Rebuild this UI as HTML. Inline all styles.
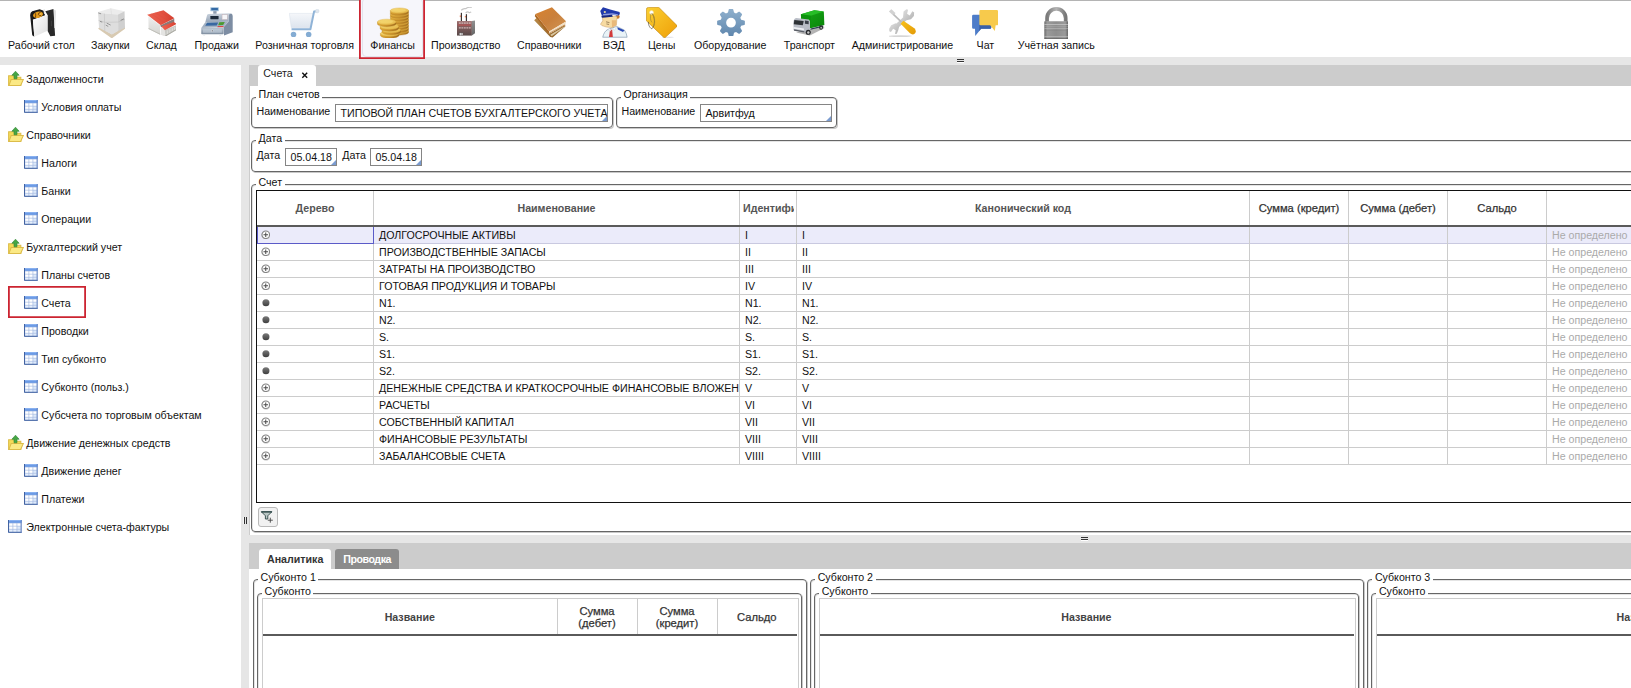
<!DOCTYPE html>
<html lang="ru"><head><meta charset="utf-8"><title>Счета</title>
<style>
html,body{margin:0;padding:0}
body{width:1631px;height:688px;overflow:hidden;background:#fff;font-family:"Liberation Sans",sans-serif;font-size:10.65px;color:#111;line-height:12px}
#app{position:relative;width:1631px;height:688px;overflow:hidden;background:#fff}
#top{position:absolute;left:0;top:0;width:1631px;height:57px;z-index:3;background:#fff}
#top:before{content:"";position:absolute;left:0;top:0;width:100%;height:1px;background:#b4b4b4}
.ti{position:absolute;top:0;height:57px;text-align:center;white-space:nowrap}
.ti .tl{position:absolute;left:0;top:38.6px;color:#111}
.bi{position:absolute;z-index:2;display:block}
.ti.sel:before{content:"";position:absolute;left:-11.2px;width:66.3px;top:-3px;height:61.7px;box-shadow:inset 0 0 0 1.8px #cc2431;background:#f6f6fb;z-index:0;box-sizing:border-box}
.ti.sel:after{content:"";position:absolute;left:-8.3px;width:60.6px;top:-2px;height:59px;border:1px solid #e3e3ec;border-radius:4px;z-index:0;box-sizing:border-box}
.ti.sel .tl{z-index:1}
#hs1{position:absolute;left:0;top:57px;width:1631px;height:8px;background:#e6e6e6}
.hh{position:absolute;width:7px;height:3.4px;border-top:1px solid #333;border-bottom:1px solid #333;box-shadow:0 1px 0 #fff;box-sizing:border-box}
#left{position:absolute;left:0;top:65px;width:241px;height:623px;background:#fff;overflow:hidden}
.tr{position:relative;height:28px;line-height:28px;white-space:nowrap}
.tr span{position:absolute;top:0}
.tr .si{position:absolute}
.tr.l0 .si{left:8px}
.tr.l0 span{left:26.3px}
.tr.l1 .si{left:24.2px}
.tr.l1 span{left:41.3px}
.si.f{width:15.8px;height:15.2px;top:6px}
.si.t{width:13.6px;height:12.8px;top:7.1px}
.tr.l0 .si.t{top:7.2px}
.tr.cur:before{content:"";position:absolute;left:8px;top:-3px;width:78px;height:32px;box-shadow:inset 0 0 0 1.8px #cc2431;box-sizing:border-box}
#vs{position:absolute;left:241px;top:65px;width:8px;height:623px;background:#e6e6e6}
.vh{position:absolute;left:2.5px;top:452px;width:3.6px;height:7px;border-left:1px solid #333;border-right:1px solid #333;box-sizing:border-box;box-shadow:-1px 0 0 #f6f6f6}
#right{position:absolute;left:249px;top:65px;width:1382px;height:623px;background:#fff;overflow:hidden}
.tabbar{position:absolute;left:0;width:1382px;background:#ccc}
#tb1{top:0;height:21px}
#tb2{top:478px;height:26px}
.tab{position:absolute;bottom:0;border-radius:3px 3px 0 0;box-sizing:border-box}
#tb1 .tab{height:21px}
#tb2 .tab{height:20px}
.tab.act{background:#fff;color:#222}
.tab.ina{background:#8c8c8c;color:#fff}
.tab.b{font-weight:bold;color:#333}
.tab.ina.b{color:#fff}
.tab .tt{position:absolute;left:5.3px;top:1.8px}
#tb2 .tab .tt{left:8.5px;top:4px}
.tab .tx{position:absolute;left:43.3px;top:7.2px}
.cx{width:7.5px;height:6.5px;display:block}
#upper{position:absolute;left:1px;top:21px;width:1381px;height:449px;background:#fff;overflow:hidden}
#right:before{content:"";position:absolute;left:0;top:0;width:1px;height:623px;background:#ccc}
#hs2{position:absolute;left:0;top:470px;width:1382px;height:8px;background:#e6e6e6}
#lower{position:absolute;left:0;top:504px;width:1382px;height:119px;background:#fff;overflow:hidden}
.fs{position:absolute;border:1px solid #666;border-radius:4px;box-shadow:1px 1px 0 #c8c8c8, inset 1px 1px 0 #e4e4e4;box-sizing:border-box}
.lg{position:absolute;top:-9px;background:#fff;padding:0 2.5px;white-space:nowrap;line-height:12px}
.lb{position:absolute;white-space:nowrap}
.inp{position:absolute;height:18px;line-height:17px;border:1px solid #858585;box-sizing:border-box;padding-left:4.5px;white-space:nowrap;overflow:hidden;background:#fff}
.inp:after{content:"";position:absolute;right:0;bottom:0;border-style:solid;border-width:0 0 5px 5px;border-color:transparent transparent #7a9bd0 transparent}
#grid{position:absolute;left:4px;top:5px;width:1500px;height:313px;border:1px solid #111;box-sizing:border-box;overflow:hidden;background:#fff}
.gh{height:33.5px;border-bottom:2px solid #5a5a5a;display:flex;white-space:nowrap}
.hc{box-sizing:border-box;border-right:1px solid #ccc;height:33.5px;line-height:34px;text-align:center;font-weight:bold;color:#555;overflow:hidden;flex:none}
.sc.dk{line-height:12.4px;padding-top:2.3px}
.hc.dk,.sc.dk{color:#333;font-weight:normal;font-size:11.2px;-webkit-text-stroke:0.25px #333}
.hc.cl{text-align:left;padding-left:3px}
.hc.cl span{display:block;overflow:hidden;width:51px}
.gr{height:17.04px;display:flex;white-space:nowrap;border-bottom:1px solid #ccc;box-sizing:border-box}
.gr.first{background:#ebebfa}
.gc{box-sizing:border-box;border-right:1px solid #ccc;height:17.04px;line-height:16.5px;padding-left:5px;overflow:hidden;flex:none;position:relative}
.gr.first .gc:first-child{box-shadow:inset 1px 0 0 #5b5bc8,inset 0 -1px 0 #5b5bc8}
.gr.first{border-bottom-color:#c9c9e0}
.gr.first .gc:first-child{border-right-color:#5b5bc8}
.nd{color:#aaa}
.pm{position:absolute;left:3.6px;top:3.2px;width:9.5px;height:9.5px}
.fbtn{position:absolute;left:6px;top:322px;width:20px;height:19.5px;border:1px solid #b9b9b9;border-radius:3px;background:#f1f1f1;box-sizing:border-box}
.fi{position:absolute;left:-1px;top:-1px;width:19.5px;height:19.5px}
.sg{position:absolute;left:4px;top:4px;width:537px;height:200px;border:1px solid #ccc;box-sizing:border-box}
.sh{display:flex;width:533.5px;height:34.5px;border-bottom:2px solid #5a5a5a}
.sc{flex:none;box-sizing:border-box;border-right:1px solid #ccc;height:34.5px;padding-top:2px;display:flex;align-items:center;justify-content:center;text-align:center;font-weight:bold;color:#444;line-height:11.5px}
.sc:last-child{border-right:none}
.tab.ina .tt{letter-spacing:-0.45px}
</style></head><body>
<div id="app">
<div id="top">
<div class="ti" style="left:8.0px"><span class="tl">Рабочий стол</span></div>
<svg class="bi" style="left:29.6px;top:8.9px;width:26.2px;height:27.8px" viewBox="137.6 88.7 474.2 503.2" preserveAspectRatio="none">
<defs><linearGradient id="gd1" x1="0" y1="0" x2="1" y2="1"><stop offset="0" stop-color="#ffffff"/><stop offset="1" stop-color="#dedede"/></linearGradient></defs>
<path d="M140,200 Q140,150 178,130 L312,94 L385,120 L410,200 L190,285 L216,592 L178,565 Z" fill="#1b1b1b"/>
<path d="M380,92 L408,88 L418,168 L392,178 Z" fill="#ececec"/>
<path d="M415,130 L562,90 L592,572 L506,582 L455,482 L455,196 Z" fill="#292929"/>
<path d="M190,285 L455,196 L455,482 L216,592 Z" fill="url(#gd1)"/>
<path d="M572,104 L612,116 L592,432 L578,432 Z" fill="#e2e2e2"/>
<ellipse cx="283" cy="192" rx="92" ry="56" fill="#e59c1a" transform="rotate(-14 283 192)"/>
<path d="M222,160 q20,10 20,40 l-6,45 M300,160 q-30,30 10,50 q35,0 35,-35 q-15,-30 -45,-15" stroke="#5e3306" stroke-width="15" fill="none"/>
<ellipse cx="335" cy="178" rx="22" ry="18" fill="#f4bd46"/>
<path d="M525,300 v100" stroke="#5c5c5c" stroke-width="8"/>
</svg>
<div class="ti" style="left:91.0px"><span class="tl">Закупки</span></div>
<svg class="bi" style="left:97.5px;top:8.2px;width:27.8px;height:30.3px" viewBox="99.6 76.0 503.2 548.4" preserveAspectRatio="none">
<path d="M103,450 L350,626 L604,440 L580,405 L350,550 L125,420 Z" fill="#d8cab2"/>
<path d="M100,150 L330,80 L580,135 L462,192 L215,175 Z" fill="#ececec"/>
<path d="M100,150 L215,175 L462,192 L465,492 L352,556 L118,432 Z" fill="#dedede"/>
<path d="M462,192 L580,135 L588,432 L465,492 Z" fill="#d0d0d0"/>
<path d="M215,175 L222,495 M110,300 L222,335 L465,330 L586,285" stroke="#bcbcbc" stroke-width="9" fill="none"/>
<path d="M330,82 L345,186" stroke="#d6d6d6" stroke-width="8" fill="none"/>
<path d="M105,165 l50,16 M135,318 l42,14 M240,385 l45,25 M258,350 l70,35 M510,300 l60,-28" stroke="#4a4a4a" stroke-width="11" fill="none" opacity=".8"/>
</svg>
<div class="ti" style="left:146.0px"><span class="tl">Склад</span></div>
<svg class="bi" style="left:146.7px;top:9.5px;width:29.8px;height:26.8px" viewBox="121.3 99.6 539.4 485.1" preserveAspectRatio="none">
<defs><linearGradient id="gw1" x1="0" y1="0" x2="1" y2="0"><stop offset="0" stop-color="#ea6250"/><stop offset=".6" stop-color="#e25040"/><stop offset="1" stop-color="#d43e2e"/></linearGradient>
<linearGradient id="gw2" x1="0" y1="0" x2="0" y2="1"><stop offset="0" stop-color="#efefef"/><stop offset="1" stop-color="#d4d4d0"/></linearGradient></defs>
<path d="M145,212 L360,380 L360,548 L150,442 Z" fill="url(#gw2)"/>
<path d="M360,380 L615,258 L615,330 L380,410 Z" fill="#8a7a78"/>
<path d="M125,185 L420,104 L617,250 L370,377 Z" fill="url(#gw1)"/>
<path d="M200,168 L440,330 M270,148 L505,298 M345,126 L565,268" stroke="#d84838" stroke-width="7" fill="none" opacity=".7"/>
<path d="M375,410 L445,462 L452,582 L375,548 Z" fill="#e4e4e2"/>
<path d="M445,462 L656,372 L652,462 L452,582 Z" fill="#c9c9c5"/>
<path d="M380,400 L606,318 L660,352 L445,464 Z" fill="url(#gw1)"/>
<path d="M150,425 L360,530 L360,548 L150,442 Z" fill="#bdbdb6"/>
<path d="M490,470 v70 M535,448 v66 M580,428 v62 M622,408 v58" stroke="#e6e6e2" stroke-width="13"/>
<path d="M452,560 L652,445 L652,462 L452,582 Z" fill="#a9a9a2"/>
</svg>
<div class="ti" style="left:194.4px"><span class="tl">Продажи</span></div>
<svg class="bi" style="left:201.2px;top:6.7px;width:31.7px;height:29.3px" viewBox="94.1 85.1 573.8 530.3" preserveAspectRatio="none">
<defs><linearGradient id="gc1" x1="0" y1="0" x2="0" y2="1"><stop offset="0" stop-color="#b6c2ce"/><stop offset="1" stop-color="#7f8ea0"/></linearGradient>
<linearGradient id="gc2" x1="0" y1="0" x2="0" y2="1"><stop offset="0" stop-color="#c9d2dd"/><stop offset="1" stop-color="#97a6b8"/></linearGradient></defs>
<rect x="262" y="88" width="156" height="74" rx="8" fill="#a9c6de"/>
<rect x="280" y="102" width="120" height="42" fill="#356ba6"/>
<rect x="316" y="160" width="60" height="48" fill="#8e9caf"/>
<path d="M500,452 L592,350 L592,215 L640,202 Q668,215 668,250 L668,540 L512,602 Z" fill="#7d8da3"/>
<path d="M200,250 Q200,215 235,212 L640,200 L592,232 L592,352 L172,362 Z" fill="url(#gc2)"/>
<rect x="264" y="250" width="148" height="56" rx="6" fill="#1d2b3b"/>
<rect x="476" y="226" width="94" height="84" fill="#f6f6f8" stroke="#c9a8a8" stroke-width="6"/>
<path d="M172,362 L592,352 L500,452 L100,464 Z" fill="#a3b1c2"/>
<path d="M205,368 L405,364 L380,420 L170,426 Z" fill="#3868a2"/>
<path d="M425,362 L525,358 L495,410 L405,414 Z" fill="#4b9a32"/>
<path d="M400,430 L505,427 L492,450 L388,452 Z" fill="#da4a4a"/>
<rect x="98" y="462" width="406" height="116" rx="14" fill="url(#gc1)"/>
<rect x="130" y="480" width="342" height="72" rx="8" fill="#c5d0dc" opacity=".6"/>
<circle cx="297" cy="516" r="19" fill="#fff"/><circle cx="297" cy="516" r="11" fill="#1a2230"/>
<ellipse cx="152" cy="590" rx="20" ry="9" fill="#dfe3e8"/><ellipse cx="442" cy="604" rx="20" ry="9" fill="#dfe3e8"/>
</svg>
<div class="ti" style="left:255.3px"><span class="tl">Розничная торговля</span></div>
<svg class="bi" style="left:289.2px;top:8.7px;width:30.4px;height:28.4px" viewBox="94.1 85.1 550.2 514.0" preserveAspectRatio="none">
<defs><linearGradient id="gk1" x1="0" y1="0" x2="0" y2="1"><stop offset="0" stop-color="#f5f7fa"/><stop offset="1" stop-color="#dde4ee"/></linearGradient></defs>
<path d="M100,165 L528,165 L472,425 L135,425 Z" fill="url(#gk1)" stroke="#d3dce8" stroke-width="8"/>
<path d="M598,125 L548,132 L482,452 L140,452" stroke="#8fb3d7" stroke-width="36" fill="none" stroke-linejoin="round"/>
<circle cx="605" cy="122" r="34" fill="#dfe6ee" stroke="#c3d0dd" stroke-width="6"/>
<circle cx="176" cy="546" r="50" fill="#84acd3"/>
<circle cx="450" cy="546" r="50" fill="#84acd3"/>
</svg>
<div class="ti sel" style="left:370.3px"><span class="tl">Финансы</span></div>
<svg class="bi" style="left:377.0px;top:7.3px;width:31.9px;height:31.2px" viewBox="90.5 59.7 577.4 564.7" preserveAspectRatio="none"><defs><linearGradient id="gcs" x1="0" y1="0" x2="1" y2="0"><stop offset="0" stop-color="#dfa936"/><stop offset=".5" stop-color="#c88f2a"/><stop offset="1" stop-color="#a06c1c"/></linearGradient><linearGradient id="gct" x1="0" y1="0" x2="1" y2="1"><stop offset="0" stop-color="#f7dc7c"/><stop offset="1" stop-color="#e3b442"/></linearGradient></defs><path d="M332,489 v32 a165,48 0 0 0 330,0 v-32 z" fill="url(#gcs)" stroke="#a97822" stroke-width="5"/><ellipse cx="497" cy="489" rx="165" ry="48" fill="#cc9630" stroke="#e8bd50" stroke-width="7"/><path d="M332,437 v32 a165,48 0 0 0 330,0 v-32 z" fill="url(#gcs)" stroke="#a97822" stroke-width="5"/><ellipse cx="497" cy="437" rx="165" ry="48" fill="#cc9630" stroke="#e8bd50" stroke-width="7"/><path d="M332,385 v32 a165,48 0 0 0 330,0 v-32 z" fill="url(#gcs)" stroke="#a97822" stroke-width="5"/><ellipse cx="497" cy="385" rx="165" ry="48" fill="#cc9630" stroke="#e8bd50" stroke-width="7"/><path d="M332,333 v32 a165,48 0 0 0 330,0 v-32 z" fill="url(#gcs)" stroke="#a97822" stroke-width="5"/><ellipse cx="497" cy="333" rx="165" ry="48" fill="#cc9630" stroke="#e8bd50" stroke-width="7"/><path d="M332,281 v32 a165,48 0 0 0 330,0 v-32 z" fill="url(#gcs)" stroke="#a97822" stroke-width="5"/><ellipse cx="497" cy="281" rx="165" ry="48" fill="#cc9630" stroke="#e8bd50" stroke-width="7"/><path d="M332,229 v32 a165,48 0 0 0 330,0 v-32 z" fill="url(#gcs)" stroke="#a97822" stroke-width="5"/><ellipse cx="497" cy="229" rx="165" ry="48" fill="#cc9630" stroke="#e8bd50" stroke-width="7"/><path d="M332,177 v32 a165,48 0 0 0 330,0 v-32 z" fill="url(#gcs)" stroke="#a97822" stroke-width="5"/><ellipse cx="497" cy="177" rx="165" ry="48" fill="#cc9630" stroke="#e8bd50" stroke-width="7"/><path d="M332,125 v32 a165,48 0 0 0 330,0 v-32 z" fill="url(#gcs)" stroke="#a97822" stroke-width="5"/><ellipse cx="497" cy="125" rx="165" ry="48" fill="url(#gct)" stroke="#e2b648" stroke-width="8"/><ellipse cx="497" cy="122" rx="115" ry="28" fill="#f3d66e" opacity=".7"/><path d="M152,540 v36 a168,50 0 0 0 336,0 v-36 z" fill="url(#gcs)" stroke="#a97822" stroke-width="5"/><ellipse cx="320" cy="540" rx="168" ry="50" fill="url(#gct)" stroke="#e2b648" stroke-width="8"/><path d="M182,478 v36 a168,50 0 0 0 336,0 v-36 z" fill="url(#gcs)" stroke="#a97822" stroke-width="5"/><ellipse cx="350" cy="478" rx="168" ry="50" fill="url(#gct)" stroke="#e2b648" stroke-width="8"/><path d="M147,412 v36 a168,50 0 0 0 336,0 v-36 z" fill="url(#gcs)" stroke="#a97822" stroke-width="5"/><ellipse cx="315" cy="412" rx="168" ry="50" fill="url(#gct)" stroke="#e2b648" stroke-width="8"/><path d="M97,330 v36 a168,50 0 0 0 336,0 v-36 z" fill="url(#gcs)" stroke="#a97822" stroke-width="5"/><ellipse cx="265" cy="330" rx="168" ry="50" fill="url(#gct)" stroke="#e2b648" stroke-width="8"/><ellipse cx="262" cy="327" rx="118" ry="30" fill="#f3d66e" opacity=".7"/></svg>
<div class="ti" style="left:431.0px"><span class="tl">Производство</span></div>
<svg class="bi" style="left:456.9px;top:7.3px;width:18.4px;height:28.6px" viewBox="215.4 59.7 333.0 517.7" preserveAspectRatio="none">
<defs><linearGradient id="gf1" x1="0" y1="0" x2="0" y2="1"><stop offset="0" stop-color="#9c6b6b"/><stop offset="1" stop-color="#574848"/></linearGradient>
<linearGradient id="gf2" x1="0" y1="0" x2="0" y2="1"><stop offset="0" stop-color="#919191"/><stop offset="1" stop-color="#666"/></linearGradient></defs>
<path d="M292,118 q40,-40 80,-28 q50,-35 110,-22 M372,168 q30,-30 55,-12 q25,10 45,-8" stroke="#c6c6c6" stroke-width="22" fill="none"/>
<rect x="284" y="165" width="22" height="150" fill="#3c3434"/><rect x="266" y="212" width="20" height="30" fill="#e07850"/>
<rect x="375" y="190" width="22" height="125" fill="#3c3434"/><rect x="357" y="222" width="20" height="26" fill="#e07850"/>
<path d="M215,315 L485,315 L485,577 L215,577 Z" fill="url(#gf1)"/>
<path d="M485,315 L546,304 L546,532 L485,577 Z" fill="url(#gf2)"/>
<rect x="235" y="372" width="235" height="30" fill="#b25252" opacity=".8"/>
<rect x="250" y="343" width="34" height="15" fill="#f6e4e4"/><rect x="295" y="343" width="34" height="15" fill="#f6e4e4"/><rect x="340" y="343" width="34" height="15" fill="#f6e4e4"/><rect x="385" y="343" width="34" height="15" fill="#f6e4e4"/><rect x="430" y="343" width="34" height="15" fill="#f6e4e4"/><rect x="250" y="431" width="34" height="15" fill="#f6e4e4"/><rect x="295" y="431" width="34" height="15" fill="#f6e4e4"/><rect x="340" y="431" width="34" height="15" fill="#f6e4e4"/><rect x="385" y="431" width="34" height="15" fill="#f6e4e4"/><rect x="430" y="431" width="34" height="15" fill="#f6e4e4"/>
<rect x="255" y="520" width="70" height="57" fill="#4a4040"/><rect x="262" y="528" width="24" height="49" fill="#e4e4e4"/><rect x="294" y="528" width="24" height="49" fill="#e4e4e4"/>
</svg>
<div class="ti" style="left:517.0px"><span class="tl">Справочники</span></div>
<svg class="bi" style="left:533.8px;top:7.3px;width:32.4px;height:30.7px" viewBox="105.0 59.7 586.4 555.7" preserveAspectRatio="none">
<defs><linearGradient id="gb1" x1="0" y1="0" x2="1" y2="1"><stop offset="0" stop-color="#d9832f"/><stop offset=".5" stop-color="#c9803c"/><stop offset="1" stop-color="#d39654"/></linearGradient>
<linearGradient id="gb2" x1="0" y1="0" x2="1" y2="1"><stop offset="0" stop-color="#b98a48"/><stop offset="1" stop-color="#8a5e26"/></linearGradient></defs>
<path d="M108,300 L150,258 L390,540 L668,384 L672,412 L442,614 L400,602 Z" fill="url(#gb2)"/>
<path d="M400,560 L660,408 L662,420 L425,590 Z" fill="#d9c6a0"/>
<path d="M130,185 L430,64 L688,320 L380,502 Z" fill="url(#gb1)"/>
<path d="M130,185 L380,502 L370,542 L120,226 Z" fill="#ad6720"/>
<path d="M380,502 L688,322 L668,386 L372,542 Z" fill="#f1dfc4"/>
<path d="M372,535 L668,378 L668,388 L372,546 Z" fill="#b5722c"/>
</svg>
<div class="ti" style="left:603.0px"><span class="tl">ВЭД</span></div>
<svg class="bi" style="left:600.4px;top:7.3px;width:27.3px;height:30.5px" viewBox="115.8 59.7 494.1 552.0" preserveAspectRatio="none">
<path d="M165,607 Q190,500 255,468 L330,440 L420,412 L560,480 Q600,540 607,607 Z" fill="#e9f3f7" stroke="#5a7896" stroke-width="9"/>
<path d="M428,428 L558,480 L532,514 L440,468 Z" fill="#2848b6"/>
<path d="M298,470 L336,470 L348,603 L278,603 Z" fill="#d23a3a"/>
<path d="M255,468 L300,455 L318,500 Z M340,455 L420,412 L380,480 Z" fill="#fff" stroke="#9fb4c8" stroke-width="5"/>
<circle cx="436" cy="236" r="36" fill="#c97a2a"/>
<path d="M160,250 L340,222 L425,232 L412,392 L332,432 L232,422 L150,396 L124,370 L166,310 Z" fill="#f7dba2" stroke="#b8864a" stroke-width="7"/>
<path d="M330,300 L412,300 L410,392 L332,432 Z" fill="#e9b97a"/>
<path d="M225,328 l62,14 M232,366 l48,10" stroke="#4a3018" stroke-width="9" fill="none"/>
<path d="M120,132 L170,64 L300,104 L470,150 L476,192 L440,212 L330,202 L150,218 Z" fill="#2139aa"/>
<path d="M175,188 L335,172 L440,190 L440,212 L330,202 L165,214 Z" fill="#8d9be0"/>
<path d="M145,218 L332,200 L348,238 L152,252 Q135,240 145,218 Z" fill="#17277f"/>
<circle cx="203" cy="150" r="20" fill="#ead9a0"/>
</svg>
<div class="ti" style="left:648.0px"><span class="tl">Цены</span></div>
<svg class="bi" style="left:645.8px;top:6.8px;width:31.3px;height:31.2px" viewBox="105.0 50.7 566.5 564.7" preserveAspectRatio="none">
<defs><linearGradient id="gt1" x1="0" y1="0" x2="1" y2="1"><stop offset="0" stop-color="#fbd032"/><stop offset="1" stop-color="#ef9f08"/></linearGradient></defs>
<ellipse cx="500" cy="600" rx="110" ry="12" fill="#e4e4ea"/>
<path d="M112,95 Q112,60 148,58 L335,56 L666,386 Q672,398 660,410 L452,604 Q440,612 428,602 L112,300 Z" fill="url(#gt1)" stroke="#bd820e" stroke-width="11" stroke-linejoin="round"/>
<circle cx="205" cy="150" r="36" fill="#fff" stroke="#f6e29a" stroke-width="10"/>
<path d="M214,168 C270,230 275,380 215,442 C190,452 140,380 150,320" stroke="#55513f" stroke-width="13" fill="none"/>
<path d="M214,168 C268,230 272,330 250,390" stroke="#b9962e" stroke-width="13" fill="none"/>
<path d="M196,170 C180,230 180,300 214,330" stroke="#8a7a3a" stroke-width="10" fill="none"/>
</svg>
<div class="ti" style="left:694.0px"><span class="tl">Оборудование</span></div>
<svg class="bi" style="left:716.9px;top:8.8px;width:28.0px;height:27.2px" viewBox="114.9 59.8 190.3 184.9" preserveAspectRatio="none">
<defs><linearGradient id="gg1" x1="0" y1="0" x2="0" y2="1"><stop offset="0" stop-color="#8fb0cd"/><stop offset="1" stop-color="#5f86ad"/></linearGradient></defs>
<path fill-rule="evenodd" d="M189.4,84.0 L194.6,63.3 L198.6,58.7 L221.4,58.7 L225.4,63.3 L230.6,84.0 L244.2,89.7 L262.5,78.7 L268.7,78.3 L284.7,94.3 L284.3,100.5 L273.3,118.8 L279.0,132.4 L299.7,137.6 L304.3,141.6 L304.3,164.4 L299.7,168.4 L279.0,173.6 L273.3,187.2 L284.3,205.5 L284.7,211.7 L268.7,227.7 L262.5,227.3 L244.2,216.3 L230.6,222.0 L225.4,242.7 L221.4,247.3 L198.6,247.3 L194.6,242.7 L189.4,222.0 L175.8,216.3 L157.5,227.3 L151.3,227.7 L135.3,211.7 L135.7,205.5 L146.7,187.2 L141.0,173.6 L120.3,168.4 L115.7,164.4 L115.7,141.6 L120.3,137.6 L141.0,132.4 L146.7,118.8 L135.7,100.5 L135.3,94.3 L151.3,78.3 L157.5,78.7 L175.8,89.7 Z M210,153 m-33,0 a33,33 0 1 0 66,0 a33,33 0 1 0 -66,0 Z" fill="url(#gg1)"/></svg>
<div class="ti" style="left:783.8px"><span class="tl">Транспорт</span></div>
<svg class="bi" style="left:793.2px;top:10.2px;width:31.7px;height:25.6px" viewBox="94.1 112.2 573.8 463.4" preserveAspectRatio="none">
<defs><linearGradient id="gr1" x1="0" y1="0" x2="1" y2="1"><stop offset="0" stop-color="#18a818"/><stop offset="1" stop-color="#0a860a"/></linearGradient></defs>
<path d="M150,520 L400,575 L665,440 L640,400 L300,480 Z" fill="#b4b4b4"/>
<path d="M238,188 L480,116 L652,140 L662,382 L412,442 L240,330 Z" fill="url(#gr1)"/>
<path d="M238,188 L480,116 L652,140 L415,216 Z" fill="#27bd27"/>
<path d="M238,188 L415,216 L412,442 L240,330 Z" fill="#0c920c"/>
<path d="M412,445 L640,392 L640,415 L412,470 Z" fill="#2e3a50"/>
<path d="M100,345 Q105,270 150,258 L380,285 L402,310 L402,470 L330,520 L110,478 Z" fill="#b9bdc6"/>
<path d="M118,292 L288,312 L272,388 L108,370 Z" fill="#2e3236"/>
<path d="M310,302 L378,312 L378,372 L310,362 Z" fill="#3a4048"/>
<path d="M108,418 L292,448 L292,478 L110,450 Z" fill="#eef0f4"/>
<path d="M108,462 L300,496 L300,520 L112,488 Z" fill="#5a5e66"/>
<circle cx="370" cy="516" r="46" fill="#26282c"/><circle cx="372" cy="518" r="22" fill="#c9c9c9"/>
<ellipse cx="602" cy="430" rx="34" ry="40" fill="#26282c"/><ellipse cx="604" cy="432" rx="15" ry="18" fill="#bdbdbd"/>
</svg>
<div class="ti" style="left:851.7px"><span class="tl">Администрирование</span></div>
<svg class="bi" style="left:888.9px;top:8.7px;width:27.1px;height:28.2px" viewBox="124.9 85.1 490.5 510.4" preserveAspectRatio="none">
<defs><linearGradient id="gz1" x1="0" y1="0" x2="1" y2="1"><stop offset="0" stop-color="#dedede"/><stop offset="1" stop-color="#b2b2b2"/></linearGradient>
<linearGradient id="gz2" x1="0" y1="0" x2="1" y2="1"><stop offset="0" stop-color="#f8c21c"/><stop offset="1" stop-color="#e39a06"/></linearGradient></defs>
<ellipse cx="330" cy="576" rx="215" ry="17" fill="#d6d6d6"/>
<path d="M255,405 L455,222" stroke="url(#gz1)" stroke-width="78"/>
<path d="M388,132 L440,90 L470,100 L452,172 L500,202 L548,128 L580,150 L576,212 L522,272 L440,290 L380,230 Z" fill="url(#gz1)"/>
<path d="M128,442 L165,380 L245,345 L310,400 L292,470 L266,532 L234,536 L246,470 L200,444 L160,502 L130,490 Z" fill="url(#gz1)"/>
<path d="M128,130 L168,92 L238,160 L198,196 Z" fill="#d2d2d2" stroke="#bdbdbd" stroke-width="6"/>
<path d="M205,182 L352,322" stroke="#bcbcbc" stroke-width="30"/>
<path d="M335,352 L385,298 L590,440 Q630,500 588,535 Q545,560 500,520 Z" fill="url(#gz2)"/>
</svg>
<div class="ti" style="left:976.6px"><span class="tl">Чат</span></div>
<svg class="bi" style="left:971.8px;top:9.9px;width:26.0px;height:25.9px" viewBox="305.1 95.0 249.4 248.5" preserveAspectRatio="none">
<path d="M318,140 h160 a12,12 0 0 1 12,12 v112 a12,12 0 0 1 -12,12 h-85 l-57,68 l-2,-68 h-16 a12,12 0 0 1 -12,-12 v-112 a12,12 0 0 1 12,-12 z" fill="#4d7cc8"/>
<path d="M376,240 h114 v24 a12,12 0 0 1 -12,12 h-85 l-20,20 z" fill="#3b61a8"/>
<path d="M388,96 h156 a12,12 0 0 1 12,12 v122 a12,12 0 0 1 -12,12 h-12 l-8,54 l-44,-54 h-92 a12,12 0 0 1 -12,-12 v-122 a12,12 0 0 1 12,-12 z" fill="#f7ca4c"/>
</svg>
<div class="ti" style="left:1017.8px"><span class="tl">Учётная запись</span></div>
<svg class="bi" style="left:1043.8px;top:6.9px;width:24.2px;height:32.0px" viewBox="159.3 52.5 438.0 579.2" preserveAspectRatio="none">
<defs><linearGradient id="gl1" x1="0" y1="0" x2="1" y2="0"><stop offset="0" stop-color="#6a6a6a"/><stop offset=".12" stop-color="#9a9a9a"/><stop offset=".5" stop-color="#8e8e8e"/><stop offset=".88" stop-color="#9a9a9a"/><stop offset="1" stop-color="#666"/></linearGradient>
<linearGradient id="gl2" x1="0" y1="0" x2="1" y2="0"><stop offset="0" stop-color="#7a7a7a"/><stop offset=".5" stop-color="#b4b4b4"/><stop offset="1" stop-color="#767676"/></linearGradient></defs>
<path d="M215,320 V255 A166,166 0 0 1 552,255 V320" stroke="url(#gl2)" stroke-width="68" fill="none"/>
<rect x="165" y="310" width="430" height="322" rx="10" fill="url(#gl1)"/>
<rect x="165" y="362" width="430" height="14" fill="#d2d2d2" opacity=".8"/><rect x="165" y="400" width="430" height="8" fill="#b8b8b8" opacity=".7"/><rect x="165" y="436" width="430" height="12" fill="#c8c8c8" opacity=".7"/><rect x="165" y="470" width="430" height="8" fill="#777" opacity=".5"/><rect x="165" y="584" width="430" height="14" fill="#d0d0d0" opacity=".7"/><rect x="165" y="612" width="430" height="18" fill="#555" opacity=".6"/></svg>
</div>
<div id="hs1"><i class="hh" style="left:957px;top:2px"></i></div>
<div id="left">
<div class="tr l0"><svg class="si f" viewBox="0 0 16 15" preserveAspectRatio="none"><path d="M0.6 4.6h5.2l1 1.5h6.2v8.3h-12.4z" fill="#f5da58" stroke="#dcbc4a" stroke-width="1"/><path d="M0.9 14.4l2.3-6h12.3l-2.7 6z" fill="#fbe985" stroke="#dcbc4a" stroke-width="1"/><path d="M7.6 0.2l3.7 4h-2.2v3.5h-3v-3.5h-2.2z" fill="#45a645" stroke="#2f8433" stroke-width=".6"/></svg><span>Задолженности</span></div>
<div class="tr l1"><svg class="si t" viewBox="0 0 14 13" preserveAspectRatio="none"><rect width="14" height="13" fill="#a4b9e0"/><rect width="14" height="2.9" fill="#6c9be6"/><rect y="0" width="14" height="1" fill="#8ab1f0"/><rect x="1.25" y="3.45" width="3.45" height="2.45" fill="#ffffff"/><rect x="5.40" y="3.45" width="3.45" height="2.45" fill="#ffffff"/><rect x="9.55" y="3.45" width="3.45" height="2.45" fill="#ffffff"/><rect x="1.25" y="6.55" width="3.45" height="2.45" fill="#ffffff"/><rect x="5.40" y="6.55" width="3.45" height="2.45" fill="#ffffff"/><rect x="9.55" y="6.55" width="3.45" height="2.45" fill="#dde9fa"/><rect x="1.25" y="9.65" width="3.45" height="2.45" fill="#e6effc"/><rect x="5.40" y="9.65" width="3.45" height="2.45" fill="#e6effc"/><rect x="9.55" y="9.65" width="3.45" height="2.45" fill="#dde9fa"/><path d="M0.5 0v12.5h13.5" stroke="#40609f" stroke-width="1" fill="none"/><path d="M13.6 0v13" stroke="#5878b8" stroke-width=".8"/></svg><span>Условия оплаты</span></div>
<div class="tr l0"><svg class="si f" viewBox="0 0 16 15" preserveAspectRatio="none"><path d="M0.6 4.6h5.2l1 1.5h6.2v8.3h-12.4z" fill="#f5da58" stroke="#dcbc4a" stroke-width="1"/><path d="M0.9 14.4l2.3-6h12.3l-2.7 6z" fill="#fbe985" stroke="#dcbc4a" stroke-width="1"/><path d="M7.6 0.2l3.7 4h-2.2v3.5h-3v-3.5h-2.2z" fill="#45a645" stroke="#2f8433" stroke-width=".6"/></svg><span>Справочники</span></div>
<div class="tr l1"><svg class="si t" viewBox="0 0 14 13" preserveAspectRatio="none"><rect width="14" height="13" fill="#a4b9e0"/><rect width="14" height="2.9" fill="#6c9be6"/><rect y="0" width="14" height="1" fill="#8ab1f0"/><rect x="1.25" y="3.45" width="3.45" height="2.45" fill="#ffffff"/><rect x="5.40" y="3.45" width="3.45" height="2.45" fill="#ffffff"/><rect x="9.55" y="3.45" width="3.45" height="2.45" fill="#ffffff"/><rect x="1.25" y="6.55" width="3.45" height="2.45" fill="#ffffff"/><rect x="5.40" y="6.55" width="3.45" height="2.45" fill="#ffffff"/><rect x="9.55" y="6.55" width="3.45" height="2.45" fill="#dde9fa"/><rect x="1.25" y="9.65" width="3.45" height="2.45" fill="#e6effc"/><rect x="5.40" y="9.65" width="3.45" height="2.45" fill="#e6effc"/><rect x="9.55" y="9.65" width="3.45" height="2.45" fill="#dde9fa"/><path d="M0.5 0v12.5h13.5" stroke="#40609f" stroke-width="1" fill="none"/><path d="M13.6 0v13" stroke="#5878b8" stroke-width=".8"/></svg><span>Налоги</span></div>
<div class="tr l1"><svg class="si t" viewBox="0 0 14 13" preserveAspectRatio="none"><rect width="14" height="13" fill="#a4b9e0"/><rect width="14" height="2.9" fill="#6c9be6"/><rect y="0" width="14" height="1" fill="#8ab1f0"/><rect x="1.25" y="3.45" width="3.45" height="2.45" fill="#ffffff"/><rect x="5.40" y="3.45" width="3.45" height="2.45" fill="#ffffff"/><rect x="9.55" y="3.45" width="3.45" height="2.45" fill="#ffffff"/><rect x="1.25" y="6.55" width="3.45" height="2.45" fill="#ffffff"/><rect x="5.40" y="6.55" width="3.45" height="2.45" fill="#ffffff"/><rect x="9.55" y="6.55" width="3.45" height="2.45" fill="#dde9fa"/><rect x="1.25" y="9.65" width="3.45" height="2.45" fill="#e6effc"/><rect x="5.40" y="9.65" width="3.45" height="2.45" fill="#e6effc"/><rect x="9.55" y="9.65" width="3.45" height="2.45" fill="#dde9fa"/><path d="M0.5 0v12.5h13.5" stroke="#40609f" stroke-width="1" fill="none"/><path d="M13.6 0v13" stroke="#5878b8" stroke-width=".8"/></svg><span>Банки</span></div>
<div class="tr l1"><svg class="si t" viewBox="0 0 14 13" preserveAspectRatio="none"><rect width="14" height="13" fill="#a4b9e0"/><rect width="14" height="2.9" fill="#6c9be6"/><rect y="0" width="14" height="1" fill="#8ab1f0"/><rect x="1.25" y="3.45" width="3.45" height="2.45" fill="#ffffff"/><rect x="5.40" y="3.45" width="3.45" height="2.45" fill="#ffffff"/><rect x="9.55" y="3.45" width="3.45" height="2.45" fill="#ffffff"/><rect x="1.25" y="6.55" width="3.45" height="2.45" fill="#ffffff"/><rect x="5.40" y="6.55" width="3.45" height="2.45" fill="#ffffff"/><rect x="9.55" y="6.55" width="3.45" height="2.45" fill="#dde9fa"/><rect x="1.25" y="9.65" width="3.45" height="2.45" fill="#e6effc"/><rect x="5.40" y="9.65" width="3.45" height="2.45" fill="#e6effc"/><rect x="9.55" y="9.65" width="3.45" height="2.45" fill="#dde9fa"/><path d="M0.5 0v12.5h13.5" stroke="#40609f" stroke-width="1" fill="none"/><path d="M13.6 0v13" stroke="#5878b8" stroke-width=".8"/></svg><span>Операции</span></div>
<div class="tr l0"><svg class="si f" viewBox="0 0 16 15" preserveAspectRatio="none"><path d="M0.6 4.6h5.2l1 1.5h6.2v8.3h-12.4z" fill="#f5da58" stroke="#dcbc4a" stroke-width="1"/><path d="M0.9 14.4l2.3-6h12.3l-2.7 6z" fill="#fbe985" stroke="#dcbc4a" stroke-width="1"/><path d="M7.6 0.2l3.7 4h-2.2v3.5h-3v-3.5h-2.2z" fill="#45a645" stroke="#2f8433" stroke-width=".6"/></svg><span>Бухгалтерский учет</span></div>
<div class="tr l1"><svg class="si t" viewBox="0 0 14 13" preserveAspectRatio="none"><rect width="14" height="13" fill="#a4b9e0"/><rect width="14" height="2.9" fill="#6c9be6"/><rect y="0" width="14" height="1" fill="#8ab1f0"/><rect x="1.25" y="3.45" width="3.45" height="2.45" fill="#ffffff"/><rect x="5.40" y="3.45" width="3.45" height="2.45" fill="#ffffff"/><rect x="9.55" y="3.45" width="3.45" height="2.45" fill="#ffffff"/><rect x="1.25" y="6.55" width="3.45" height="2.45" fill="#ffffff"/><rect x="5.40" y="6.55" width="3.45" height="2.45" fill="#ffffff"/><rect x="9.55" y="6.55" width="3.45" height="2.45" fill="#dde9fa"/><rect x="1.25" y="9.65" width="3.45" height="2.45" fill="#e6effc"/><rect x="5.40" y="9.65" width="3.45" height="2.45" fill="#e6effc"/><rect x="9.55" y="9.65" width="3.45" height="2.45" fill="#dde9fa"/><path d="M0.5 0v12.5h13.5" stroke="#40609f" stroke-width="1" fill="none"/><path d="M13.6 0v13" stroke="#5878b8" stroke-width=".8"/></svg><span>Планы счетов</span></div>
<div class="tr l1 cur"><svg class="si t" viewBox="0 0 14 13" preserveAspectRatio="none"><rect width="14" height="13" fill="#a4b9e0"/><rect width="14" height="2.9" fill="#6c9be6"/><rect y="0" width="14" height="1" fill="#8ab1f0"/><rect x="1.25" y="3.45" width="3.45" height="2.45" fill="#ffffff"/><rect x="5.40" y="3.45" width="3.45" height="2.45" fill="#ffffff"/><rect x="9.55" y="3.45" width="3.45" height="2.45" fill="#ffffff"/><rect x="1.25" y="6.55" width="3.45" height="2.45" fill="#ffffff"/><rect x="5.40" y="6.55" width="3.45" height="2.45" fill="#ffffff"/><rect x="9.55" y="6.55" width="3.45" height="2.45" fill="#dde9fa"/><rect x="1.25" y="9.65" width="3.45" height="2.45" fill="#e6effc"/><rect x="5.40" y="9.65" width="3.45" height="2.45" fill="#e6effc"/><rect x="9.55" y="9.65" width="3.45" height="2.45" fill="#dde9fa"/><path d="M0.5 0v12.5h13.5" stroke="#40609f" stroke-width="1" fill="none"/><path d="M13.6 0v13" stroke="#5878b8" stroke-width=".8"/></svg><span>Счета</span></div>
<div class="tr l1"><svg class="si t" viewBox="0 0 14 13" preserveAspectRatio="none"><rect width="14" height="13" fill="#a4b9e0"/><rect width="14" height="2.9" fill="#6c9be6"/><rect y="0" width="14" height="1" fill="#8ab1f0"/><rect x="1.25" y="3.45" width="3.45" height="2.45" fill="#ffffff"/><rect x="5.40" y="3.45" width="3.45" height="2.45" fill="#ffffff"/><rect x="9.55" y="3.45" width="3.45" height="2.45" fill="#ffffff"/><rect x="1.25" y="6.55" width="3.45" height="2.45" fill="#ffffff"/><rect x="5.40" y="6.55" width="3.45" height="2.45" fill="#ffffff"/><rect x="9.55" y="6.55" width="3.45" height="2.45" fill="#dde9fa"/><rect x="1.25" y="9.65" width="3.45" height="2.45" fill="#e6effc"/><rect x="5.40" y="9.65" width="3.45" height="2.45" fill="#e6effc"/><rect x="9.55" y="9.65" width="3.45" height="2.45" fill="#dde9fa"/><path d="M0.5 0v12.5h13.5" stroke="#40609f" stroke-width="1" fill="none"/><path d="M13.6 0v13" stroke="#5878b8" stroke-width=".8"/></svg><span>Проводки</span></div>
<div class="tr l1"><svg class="si t" viewBox="0 0 14 13" preserveAspectRatio="none"><rect width="14" height="13" fill="#a4b9e0"/><rect width="14" height="2.9" fill="#6c9be6"/><rect y="0" width="14" height="1" fill="#8ab1f0"/><rect x="1.25" y="3.45" width="3.45" height="2.45" fill="#ffffff"/><rect x="5.40" y="3.45" width="3.45" height="2.45" fill="#ffffff"/><rect x="9.55" y="3.45" width="3.45" height="2.45" fill="#ffffff"/><rect x="1.25" y="6.55" width="3.45" height="2.45" fill="#ffffff"/><rect x="5.40" y="6.55" width="3.45" height="2.45" fill="#ffffff"/><rect x="9.55" y="6.55" width="3.45" height="2.45" fill="#dde9fa"/><rect x="1.25" y="9.65" width="3.45" height="2.45" fill="#e6effc"/><rect x="5.40" y="9.65" width="3.45" height="2.45" fill="#e6effc"/><rect x="9.55" y="9.65" width="3.45" height="2.45" fill="#dde9fa"/><path d="M0.5 0v12.5h13.5" stroke="#40609f" stroke-width="1" fill="none"/><path d="M13.6 0v13" stroke="#5878b8" stroke-width=".8"/></svg><span>Тип субконто</span></div>
<div class="tr l1"><svg class="si t" viewBox="0 0 14 13" preserveAspectRatio="none"><rect width="14" height="13" fill="#a4b9e0"/><rect width="14" height="2.9" fill="#6c9be6"/><rect y="0" width="14" height="1" fill="#8ab1f0"/><rect x="1.25" y="3.45" width="3.45" height="2.45" fill="#ffffff"/><rect x="5.40" y="3.45" width="3.45" height="2.45" fill="#ffffff"/><rect x="9.55" y="3.45" width="3.45" height="2.45" fill="#ffffff"/><rect x="1.25" y="6.55" width="3.45" height="2.45" fill="#ffffff"/><rect x="5.40" y="6.55" width="3.45" height="2.45" fill="#ffffff"/><rect x="9.55" y="6.55" width="3.45" height="2.45" fill="#dde9fa"/><rect x="1.25" y="9.65" width="3.45" height="2.45" fill="#e6effc"/><rect x="5.40" y="9.65" width="3.45" height="2.45" fill="#e6effc"/><rect x="9.55" y="9.65" width="3.45" height="2.45" fill="#dde9fa"/><path d="M0.5 0v12.5h13.5" stroke="#40609f" stroke-width="1" fill="none"/><path d="M13.6 0v13" stroke="#5878b8" stroke-width=".8"/></svg><span>Субконто (польз.)</span></div>
<div class="tr l1"><svg class="si t" viewBox="0 0 14 13" preserveAspectRatio="none"><rect width="14" height="13" fill="#a4b9e0"/><rect width="14" height="2.9" fill="#6c9be6"/><rect y="0" width="14" height="1" fill="#8ab1f0"/><rect x="1.25" y="3.45" width="3.45" height="2.45" fill="#ffffff"/><rect x="5.40" y="3.45" width="3.45" height="2.45" fill="#ffffff"/><rect x="9.55" y="3.45" width="3.45" height="2.45" fill="#ffffff"/><rect x="1.25" y="6.55" width="3.45" height="2.45" fill="#ffffff"/><rect x="5.40" y="6.55" width="3.45" height="2.45" fill="#ffffff"/><rect x="9.55" y="6.55" width="3.45" height="2.45" fill="#dde9fa"/><rect x="1.25" y="9.65" width="3.45" height="2.45" fill="#e6effc"/><rect x="5.40" y="9.65" width="3.45" height="2.45" fill="#e6effc"/><rect x="9.55" y="9.65" width="3.45" height="2.45" fill="#dde9fa"/><path d="M0.5 0v12.5h13.5" stroke="#40609f" stroke-width="1" fill="none"/><path d="M13.6 0v13" stroke="#5878b8" stroke-width=".8"/></svg><span>Субсчета по торговым объектам</span></div>
<div class="tr l0"><svg class="si f" viewBox="0 0 16 15" preserveAspectRatio="none"><path d="M0.6 4.6h5.2l1 1.5h6.2v8.3h-12.4z" fill="#f5da58" stroke="#dcbc4a" stroke-width="1"/><path d="M0.9 14.4l2.3-6h12.3l-2.7 6z" fill="#fbe985" stroke="#dcbc4a" stroke-width="1"/><path d="M7.6 0.2l3.7 4h-2.2v3.5h-3v-3.5h-2.2z" fill="#45a645" stroke="#2f8433" stroke-width=".6"/></svg><span>Движение денежных средств</span></div>
<div class="tr l1"><svg class="si t" viewBox="0 0 14 13" preserveAspectRatio="none"><rect width="14" height="13" fill="#a4b9e0"/><rect width="14" height="2.9" fill="#6c9be6"/><rect y="0" width="14" height="1" fill="#8ab1f0"/><rect x="1.25" y="3.45" width="3.45" height="2.45" fill="#ffffff"/><rect x="5.40" y="3.45" width="3.45" height="2.45" fill="#ffffff"/><rect x="9.55" y="3.45" width="3.45" height="2.45" fill="#ffffff"/><rect x="1.25" y="6.55" width="3.45" height="2.45" fill="#ffffff"/><rect x="5.40" y="6.55" width="3.45" height="2.45" fill="#ffffff"/><rect x="9.55" y="6.55" width="3.45" height="2.45" fill="#dde9fa"/><rect x="1.25" y="9.65" width="3.45" height="2.45" fill="#e6effc"/><rect x="5.40" y="9.65" width="3.45" height="2.45" fill="#e6effc"/><rect x="9.55" y="9.65" width="3.45" height="2.45" fill="#dde9fa"/><path d="M0.5 0v12.5h13.5" stroke="#40609f" stroke-width="1" fill="none"/><path d="M13.6 0v13" stroke="#5878b8" stroke-width=".8"/></svg><span>Движение денег</span></div>
<div class="tr l1"><svg class="si t" viewBox="0 0 14 13" preserveAspectRatio="none"><rect width="14" height="13" fill="#a4b9e0"/><rect width="14" height="2.9" fill="#6c9be6"/><rect y="0" width="14" height="1" fill="#8ab1f0"/><rect x="1.25" y="3.45" width="3.45" height="2.45" fill="#ffffff"/><rect x="5.40" y="3.45" width="3.45" height="2.45" fill="#ffffff"/><rect x="9.55" y="3.45" width="3.45" height="2.45" fill="#ffffff"/><rect x="1.25" y="6.55" width="3.45" height="2.45" fill="#ffffff"/><rect x="5.40" y="6.55" width="3.45" height="2.45" fill="#ffffff"/><rect x="9.55" y="6.55" width="3.45" height="2.45" fill="#dde9fa"/><rect x="1.25" y="9.65" width="3.45" height="2.45" fill="#e6effc"/><rect x="5.40" y="9.65" width="3.45" height="2.45" fill="#e6effc"/><rect x="9.55" y="9.65" width="3.45" height="2.45" fill="#dde9fa"/><path d="M0.5 0v12.5h13.5" stroke="#40609f" stroke-width="1" fill="none"/><path d="M13.6 0v13" stroke="#5878b8" stroke-width=".8"/></svg><span>Платежи</span></div>
<div class="tr l0"><svg class="si t" viewBox="0 0 14 13" preserveAspectRatio="none"><rect width="14" height="13" fill="#a4b9e0"/><rect width="14" height="2.9" fill="#6c9be6"/><rect y="0" width="14" height="1" fill="#8ab1f0"/><rect x="1.25" y="3.45" width="3.45" height="2.45" fill="#ffffff"/><rect x="5.40" y="3.45" width="3.45" height="2.45" fill="#ffffff"/><rect x="9.55" y="3.45" width="3.45" height="2.45" fill="#ffffff"/><rect x="1.25" y="6.55" width="3.45" height="2.45" fill="#ffffff"/><rect x="5.40" y="6.55" width="3.45" height="2.45" fill="#ffffff"/><rect x="9.55" y="6.55" width="3.45" height="2.45" fill="#dde9fa"/><rect x="1.25" y="9.65" width="3.45" height="2.45" fill="#e6effc"/><rect x="5.40" y="9.65" width="3.45" height="2.45" fill="#e6effc"/><rect x="9.55" y="9.65" width="3.45" height="2.45" fill="#dde9fa"/><path d="M0.5 0v12.5h13.5" stroke="#40609f" stroke-width="1" fill="none"/><path d="M13.6 0v13" stroke="#5878b8" stroke-width=".8"/></svg><span>Электронные счета-фактуры</span></div>
</div>
<div id="vs"><i class="vh"></i></div>
<div id="right">
<div class="tabbar" id="tb1"><div class="tab act" style="left:9px;width:58px"><span class="tt">Счета</span><span class="tx"><svg class="cx" viewBox="0 0 8 8"><path d="M1 1l6 6M7 1l-6 6" stroke="#111" stroke-width="1.7" fill="none"/></svg></span></div></div>
<div id="upper">
<div class="fs" style="left:1px;top:11px;width:362px;height:31px"><span class="lg" style="left:4px;top:-10px">План счетов</span><span class="lb" style="left:4.5px;top:7px">Наименование</span><span class="inp" style="left:83px;top:6px;width:273px">ТИПОВОЙ ПЛАН СЧЕТОВ БУХГАЛТЕРСКОГО УЧЕТА</span></div>
<div class="fs" style="left:366px;top:11px;width:221px;height:31px"><span class="lg" style="left:4px;top:-10px">Организация</span><span class="lb" style="left:4.5px;top:7px">Наименование</span><span class="inp" style="left:83px;top:6px;width:132px">Арвитфуд</span></div>
<div class="fs" style="left:1px;top:54px;width:1500px;height:32px"><span class="lg" style="left:4px;top:-9.5px">Дата</span><span class="lb" style="left:4.5px;top:8px">Дата</span><span class="inp" style="left:33px;top:7px;width:52px">05.04.18</span><span class="lb" style="left:90.3px;top:8px">Дата</span><span class="inp" style="left:118px;top:7px;width:52px">05.04.18</span></div>
<div class="fs" style="left:1px;top:98px;width:1500px;height:348px"><span class="lg" style="left:4px">Счет</span>
<div id="grid">
<div class="gh"><div class="hc" style="width:117.0px"><span>Дерево</span></div><div class="hc" style="width:366.0px"><span>Наименование</span></div><div class="hc cl" style="width:57.0px"><span>Идентификатор</span></div><div class="hc" style="width:453.0px"><span>Канонический код</span></div><div class="hc dk" style="width:99.0px"><span>Сумма (кредит)</span></div><div class="hc dk" style="width:99.0px"><span>Сумма (дебет)</span></div><div class="hc dk" style="width:99.0px"><span>Сальдо</span></div><div class="hc" style="width:120.0px"><span></span></div></div>
<div class="gr first"><div class="gc" style="width:117.0px"><svg class="pm" viewBox="0 0 10 10"><circle cx="5.3" cy="5.5" r="4.1" fill="none" stroke="#d4d4d4" stroke-width="1.2"/><circle cx="5" cy="5" r="4" fill="#fff" stroke="#858585" stroke-width="1.2"/><path d="M2.6 5h4.8M5 2.6v4.8" stroke="#4a4a4a" stroke-width="1.05"/></svg></div><div class="gc" style="width:366.0px">ДОЛГОСРОЧНЫЕ АКТИВЫ</div><div class="gc" style="width:57.0px">I</div><div class="gc" style="width:453.0px">I</div><div class="gc" style="width:99.0px"></div><div class="gc" style="width:99.0px"></div><div class="gc" style="width:99.0px"></div><div class="gc" style="width:120.0px"><span class="nd">Не определено</span></div></div>
<div class="gr"><div class="gc" style="width:117.0px"><svg class="pm" viewBox="0 0 10 10"><circle cx="5.3" cy="5.5" r="4.1" fill="none" stroke="#d4d4d4" stroke-width="1.2"/><circle cx="5" cy="5" r="4" fill="#fff" stroke="#858585" stroke-width="1.2"/><path d="M2.6 5h4.8M5 2.6v4.8" stroke="#4a4a4a" stroke-width="1.05"/></svg></div><div class="gc" style="width:366.0px">ПРОИЗВОДСТВЕННЫЕ ЗАПАСЫ</div><div class="gc" style="width:57.0px">II</div><div class="gc" style="width:453.0px">II</div><div class="gc" style="width:99.0px"></div><div class="gc" style="width:99.0px"></div><div class="gc" style="width:99.0px"></div><div class="gc" style="width:120.0px"><span class="nd">Не определено</span></div></div>
<div class="gr"><div class="gc" style="width:117.0px"><svg class="pm" viewBox="0 0 10 10"><circle cx="5.3" cy="5.5" r="4.1" fill="none" stroke="#d4d4d4" stroke-width="1.2"/><circle cx="5" cy="5" r="4" fill="#fff" stroke="#858585" stroke-width="1.2"/><path d="M2.6 5h4.8M5 2.6v4.8" stroke="#4a4a4a" stroke-width="1.05"/></svg></div><div class="gc" style="width:366.0px">ЗАТРАТЫ НА ПРОИЗВОДСТВО</div><div class="gc" style="width:57.0px">III</div><div class="gc" style="width:453.0px">III</div><div class="gc" style="width:99.0px"></div><div class="gc" style="width:99.0px"></div><div class="gc" style="width:99.0px"></div><div class="gc" style="width:120.0px"><span class="nd">Не определено</span></div></div>
<div class="gr"><div class="gc" style="width:117.0px"><svg class="pm" viewBox="0 0 10 10"><circle cx="5.3" cy="5.5" r="4.1" fill="none" stroke="#d4d4d4" stroke-width="1.2"/><circle cx="5" cy="5" r="4" fill="#fff" stroke="#858585" stroke-width="1.2"/><path d="M2.6 5h4.8M5 2.6v4.8" stroke="#4a4a4a" stroke-width="1.05"/></svg></div><div class="gc" style="width:366.0px">ГОТОВАЯ ПРОДУКЦИЯ И ТОВАРЫ</div><div class="gc" style="width:57.0px">IV</div><div class="gc" style="width:453.0px">IV</div><div class="gc" style="width:99.0px"></div><div class="gc" style="width:99.0px"></div><div class="gc" style="width:99.0px"></div><div class="gc" style="width:120.0px"><span class="nd">Не определено</span></div></div>
<div class="gr"><div class="gc" style="width:117.0px"><svg class="pm" viewBox="0 0 10 10"><defs><linearGradient id="gdt" x1="0" y1="0" x2="0" y2="1"><stop offset="0" stop-color="#7a7a7a"/><stop offset="1" stop-color="#3e3e3e"/></linearGradient></defs><circle cx="5.2" cy="5" r="3.7" fill="url(#gdt)"/></svg></div><div class="gc" style="width:366.0px">N1.</div><div class="gc" style="width:57.0px">N1.</div><div class="gc" style="width:453.0px">N1.</div><div class="gc" style="width:99.0px"></div><div class="gc" style="width:99.0px"></div><div class="gc" style="width:99.0px"></div><div class="gc" style="width:120.0px"><span class="nd">Не определено</span></div></div>
<div class="gr"><div class="gc" style="width:117.0px"><svg class="pm" viewBox="0 0 10 10"><defs><linearGradient id="gdt" x1="0" y1="0" x2="0" y2="1"><stop offset="0" stop-color="#7a7a7a"/><stop offset="1" stop-color="#3e3e3e"/></linearGradient></defs><circle cx="5.2" cy="5" r="3.7" fill="url(#gdt)"/></svg></div><div class="gc" style="width:366.0px">N2.</div><div class="gc" style="width:57.0px">N2.</div><div class="gc" style="width:453.0px">N2.</div><div class="gc" style="width:99.0px"></div><div class="gc" style="width:99.0px"></div><div class="gc" style="width:99.0px"></div><div class="gc" style="width:120.0px"><span class="nd">Не определено</span></div></div>
<div class="gr"><div class="gc" style="width:117.0px"><svg class="pm" viewBox="0 0 10 10"><defs><linearGradient id="gdt" x1="0" y1="0" x2="0" y2="1"><stop offset="0" stop-color="#7a7a7a"/><stop offset="1" stop-color="#3e3e3e"/></linearGradient></defs><circle cx="5.2" cy="5" r="3.7" fill="url(#gdt)"/></svg></div><div class="gc" style="width:366.0px">S.</div><div class="gc" style="width:57.0px">S.</div><div class="gc" style="width:453.0px">S.</div><div class="gc" style="width:99.0px"></div><div class="gc" style="width:99.0px"></div><div class="gc" style="width:99.0px"></div><div class="gc" style="width:120.0px"><span class="nd">Не определено</span></div></div>
<div class="gr"><div class="gc" style="width:117.0px"><svg class="pm" viewBox="0 0 10 10"><defs><linearGradient id="gdt" x1="0" y1="0" x2="0" y2="1"><stop offset="0" stop-color="#7a7a7a"/><stop offset="1" stop-color="#3e3e3e"/></linearGradient></defs><circle cx="5.2" cy="5" r="3.7" fill="url(#gdt)"/></svg></div><div class="gc" style="width:366.0px">S1.</div><div class="gc" style="width:57.0px">S1.</div><div class="gc" style="width:453.0px">S1.</div><div class="gc" style="width:99.0px"></div><div class="gc" style="width:99.0px"></div><div class="gc" style="width:99.0px"></div><div class="gc" style="width:120.0px"><span class="nd">Не определено</span></div></div>
<div class="gr"><div class="gc" style="width:117.0px"><svg class="pm" viewBox="0 0 10 10"><defs><linearGradient id="gdt" x1="0" y1="0" x2="0" y2="1"><stop offset="0" stop-color="#7a7a7a"/><stop offset="1" stop-color="#3e3e3e"/></linearGradient></defs><circle cx="5.2" cy="5" r="3.7" fill="url(#gdt)"/></svg></div><div class="gc" style="width:366.0px">S2.</div><div class="gc" style="width:57.0px">S2.</div><div class="gc" style="width:453.0px">S2.</div><div class="gc" style="width:99.0px"></div><div class="gc" style="width:99.0px"></div><div class="gc" style="width:99.0px"></div><div class="gc" style="width:120.0px"><span class="nd">Не определено</span></div></div>
<div class="gr"><div class="gc" style="width:117.0px"><svg class="pm" viewBox="0 0 10 10"><circle cx="5.3" cy="5.5" r="4.1" fill="none" stroke="#d4d4d4" stroke-width="1.2"/><circle cx="5" cy="5" r="4" fill="#fff" stroke="#858585" stroke-width="1.2"/><path d="M2.6 5h4.8M5 2.6v4.8" stroke="#4a4a4a" stroke-width="1.05"/></svg></div><div class="gc" style="width:366.0px">ДЕНЕЖНЫЕ СРЕДСТВА И КРАТКОСРОЧНЫЕ ФИНАНСОВЫЕ ВЛОЖЕНИЯ</div><div class="gc" style="width:57.0px">V</div><div class="gc" style="width:453.0px">V</div><div class="gc" style="width:99.0px"></div><div class="gc" style="width:99.0px"></div><div class="gc" style="width:99.0px"></div><div class="gc" style="width:120.0px"><span class="nd">Не определено</span></div></div>
<div class="gr"><div class="gc" style="width:117.0px"><svg class="pm" viewBox="0 0 10 10"><circle cx="5.3" cy="5.5" r="4.1" fill="none" stroke="#d4d4d4" stroke-width="1.2"/><circle cx="5" cy="5" r="4" fill="#fff" stroke="#858585" stroke-width="1.2"/><path d="M2.6 5h4.8M5 2.6v4.8" stroke="#4a4a4a" stroke-width="1.05"/></svg></div><div class="gc" style="width:366.0px">РАСЧЕТЫ</div><div class="gc" style="width:57.0px">VI</div><div class="gc" style="width:453.0px">VI</div><div class="gc" style="width:99.0px"></div><div class="gc" style="width:99.0px"></div><div class="gc" style="width:99.0px"></div><div class="gc" style="width:120.0px"><span class="nd">Не определено</span></div></div>
<div class="gr"><div class="gc" style="width:117.0px"><svg class="pm" viewBox="0 0 10 10"><circle cx="5.3" cy="5.5" r="4.1" fill="none" stroke="#d4d4d4" stroke-width="1.2"/><circle cx="5" cy="5" r="4" fill="#fff" stroke="#858585" stroke-width="1.2"/><path d="M2.6 5h4.8M5 2.6v4.8" stroke="#4a4a4a" stroke-width="1.05"/></svg></div><div class="gc" style="width:366.0px">СОБСТВЕННЫЙ КАПИТАЛ</div><div class="gc" style="width:57.0px">VII</div><div class="gc" style="width:453.0px">VII</div><div class="gc" style="width:99.0px"></div><div class="gc" style="width:99.0px"></div><div class="gc" style="width:99.0px"></div><div class="gc" style="width:120.0px"><span class="nd">Не определено</span></div></div>
<div class="gr"><div class="gc" style="width:117.0px"><svg class="pm" viewBox="0 0 10 10"><circle cx="5.3" cy="5.5" r="4.1" fill="none" stroke="#d4d4d4" stroke-width="1.2"/><circle cx="5" cy="5" r="4" fill="#fff" stroke="#858585" stroke-width="1.2"/><path d="M2.6 5h4.8M5 2.6v4.8" stroke="#4a4a4a" stroke-width="1.05"/></svg></div><div class="gc" style="width:366.0px">ФИНАНСОВЫЕ РЕЗУЛЬТАТЫ</div><div class="gc" style="width:57.0px">VIII</div><div class="gc" style="width:453.0px">VIII</div><div class="gc" style="width:99.0px"></div><div class="gc" style="width:99.0px"></div><div class="gc" style="width:99.0px"></div><div class="gc" style="width:120.0px"><span class="nd">Не определено</span></div></div>
<div class="gr"><div class="gc" style="width:117.0px"><svg class="pm" viewBox="0 0 10 10"><circle cx="5.3" cy="5.5" r="4.1" fill="none" stroke="#d4d4d4" stroke-width="1.2"/><circle cx="5" cy="5" r="4" fill="#fff" stroke="#858585" stroke-width="1.2"/><path d="M2.6 5h4.8M5 2.6v4.8" stroke="#4a4a4a" stroke-width="1.05"/></svg></div><div class="gc" style="width:366.0px">ЗАБАЛАНСОВЫЕ СЧЕТА</div><div class="gc" style="width:57.0px">VIIII</div><div class="gc" style="width:453.0px">VIIII</div><div class="gc" style="width:99.0px"></div><div class="gc" style="width:99.0px"></div><div class="gc" style="width:99.0px"></div><div class="gc" style="width:120.0px"><span class="nd">Не определено</span></div></div>
</div>
<div class="fbtn"><svg class="fi" viewBox="0 0 19.5 19.5"><g transform="translate(0.5,0.7)"><path d="M2.9 4.1h10.4l-4 4v3.2h-2.4v-3.2z" fill="#b9c6c4" stroke="#2c4646" stroke-width=".9" stroke-linejoin="round"/><path d="M2.7 4.2h10.8" stroke="#2c4646" stroke-width="1.2"/></g><path d="M9.8 13.2h5M12.3 10.7v5" stroke="#444" stroke-width=".9"/></svg></div>
</div>
</div>
<div id="hs2"><i class="hh" style="left:832px;top:2px"></i></div>
<div class="tabbar" id="tb2"><div class="tab act b" style="left:9.5px;width:72.5px"><span class="tt">Аналитика</span></div><div class="tab ina b" style="left:85.7px;width:64px"><span class="tt">Проводка</span></div></div>
<div id="lower">
<div class="fs" style="left:4.0px;top:10px;width:553.5px;height:200px"><span class="lg" style="left:4px;top:-8.7px">Субконто 1</span>
<div class="fs" style="left:3px;top:13px;width:545px;height:180px"><span class="lg" style="left:4px;top:-9px">Субконто</span>
<div class="sg"><div class="sh"><div class="sc" style="width:294.5px"><span>Название</span></div><div class="sc dk" style="width:80.0px"><span>Сумма<br>(дебет)</span></div><div class="sc dk" style="width:80.0px"><span>Сумма<br>(кредит)</span></div><div class="sc dk" style="width:78.5px"><span>Сальдо</span></div></div></div>
</div></div>
<div class="fs" style="left:561.2px;top:10px;width:553.5px;height:200px"><span class="lg" style="left:4px;top:-8.7px">Субконто 2</span>
<div class="fs" style="left:3px;top:13px;width:545px;height:180px"><span class="lg" style="left:4px;top:-9px">Субконто</span>
<div class="sg"><div class="sh"><div class="sc" style="width:532.5px"><span>Название</span></div></div></div>
</div></div>
<div class="fs" style="left:1118.4px;top:10px;width:553.5px;height:200px"><span class="lg" style="left:4px;top:-8.7px">Субконто 3</span>
<div class="fs" style="left:3px;top:13px;width:545px;height:180px"><span class="lg" style="left:4px;top:-9px">Субконто</span>
<div class="sg"><div class="sh"><div class="sc" style="width:528.5px"><span>Название</span></div></div></div>
</div></div>
</div>
</div>
</div>
</body></html>
